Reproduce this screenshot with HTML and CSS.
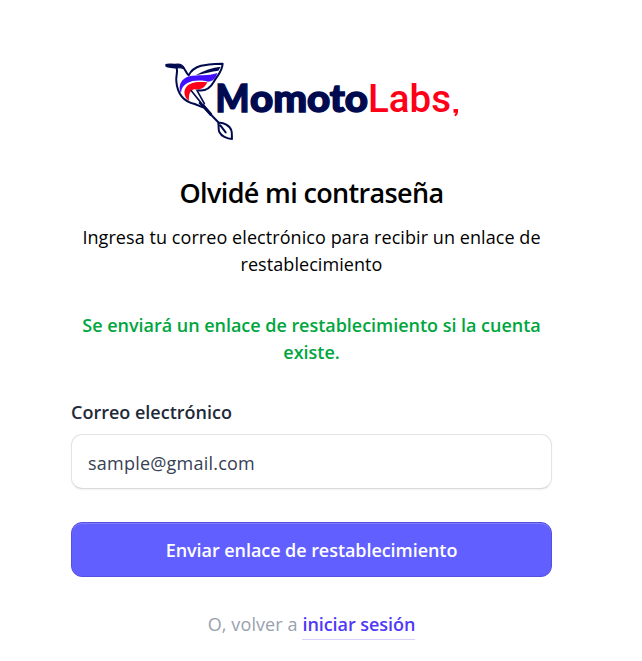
FILE: index.html
```html
<!DOCTYPE html>
<html lang="es">
<head>
<meta charset="utf-8">
<title>Olvidé mi contraseña</title>
<link rel="stylesheet" href="styles.css">
</head>
<body>
<main class="card">
  <svg class="logo" viewBox="163 60 300 82" role="img" aria-label="MomotoLabs">
    <g transform="translate(155 50) scale(.33333)" fill="none" stroke="#000b4f" stroke-width="6" stroke-linecap="round" stroke-linejoin="round">
      <path fill="#000b4f" stroke-width="4" d="M33 44C36 42 43 43 60 43C75 41 85 47 87 56C81 54 72 51 66 54C54 53 36 51 33 48Z"/>
      <path d="M65 53C69 68 62 77 64 94C67 130 84 154 119 162L144 172"/>
      <path d="M85 52C91 59 92 67 101 76C117 44 151 43 203 41C201 68 184 80 176 96C166 114 150 124 130 121"/>
      <path fill="#000b4f" stroke="none" d="M122 76C147 61 172 53 197 50L190 62C170 65 148 70 122 76Z"/>
      <path fill="#4310ff" stroke="none" d="M78 130C67 108 79 85 103 79C130 73 158 79 187 69C183 84 174 95 158 95C131 88 80 90 78 130Z"/>
      <path fill="#ff0018" stroke="none" d="M102 152C82 139 84 109 107 101C125 94 142 96 157 97C149 114 136 121 118 118C105 121 101 133 102 152Z"/>
      <path d="M109 122L150 173M126 121L148 161" stroke-width="5"/>
      <path d="M134 159L192 219" stroke-width="6"/>
      <path d="M145 167L167 193" stroke-width="9"/>
      <path d="M190 219C205 216 225 228 229 241C232 248 230 261 231 267C215 267 199 258 193 246C189 237 192 230 190 219ZM196 226L212 247"/>
    </g>
    <text class="logo-bold" x="215.5" y="112" textLength="34" lengthAdjust="spacingAndGlyphs">M</text>
    <text class="logo-bold" x="250" y="112" textLength="118" lengthAdjust="spacingAndGlyphs">omoto</text>
    <text class="logo-light" x="368" y="112" textLength="83" lengthAdjust="spacingAndGlyphs">Labs</text>
    <path class="logo-comma" d="M453.5 109h4.5v3q0 3-2.8 4.2l-1-1.3q1.3-.8 1.4-2.2h-2.1z"/>
  </svg>
  <h1 class="title">Olvidé mi contraseña</h1>
  <p class="lead">Ingresa tu correo electrónico para recibir un enlace de<br>restablecimiento</p>
  <p class="status">Se enviará un enlace de restablecimiento si la cuenta<br>existe.</p>
  <form class="form">
    <label class="label" for="email">Correo electrónico</label>
    <input class="input" id="email" type="text" value="sample@gmail.com">
    <button class="button" type="button">Enviar enlace de restablecimiento</button>
  </form>
  <p class="back">O, volver a <a class="link" href="#">iniciar sesión</a></p>
</main>
</body>
</html>
```
FILE: styles.css
```css
* { box-sizing: border-box; }
body {
  margin: 0;
  background: #fff;
  color: #000;
  font: 18px/27px "Open Sans", "Noto Sans", sans-serif;
}
.card {
  width: 481px;
  margin-left: 71px;
  padding-top: 60px;
  text-align: center;
  white-space: nowrap;
}
.logo { display: block; width: 300px; height: 82px; margin-left: 92px; }
.logo-bold {
  font: 900 38px Lato, sans-serif;
  fill: #000b4f;
  stroke: #000b4f;
  stroke-width: 1.5px;
}
.logo-light { font: 500 38px Roboto, sans-serif; fill: #ff0018; }
.logo-comma { fill: #ff0018; }
.title {
  margin: 31px 0 0;
  font-size: 27px;
  line-height: 40px;
  font-weight: 600;
  letter-spacing: -.65px;
}
.lead { margin: 11px 0 0; letter-spacing: .07px; }
.status { margin: 34px 0 0; color: #00a63e; font-weight: 600; letter-spacing: -.03px; }
.form { display: flex; flex-direction: column; margin-top: 33px; }
.label { text-align: left; color: #1e2939; font-weight: 600; }
.input {
  height: 55px;
  margin-top: 8px;
  padding: 3px 16px 0;
  border: 1px solid #e2e4e8;
  border-bottom-color: #d8dade;
  border-radius: 11px;
  box-shadow: 0 1px 2px rgba(0, 0, 0, .06);
  background: #fff;
  color: #364153;
  font: inherit;
  letter-spacing: .22px;
}
.button {
  height: 55px;
  margin-top: 33px;
  padding: 1px 0 0;
  border: 1px solid #564fe0;
  border-radius: 11px;
  background: #615fff;
  box-shadow: inset 0 1px 0 #817fff;
  color: #fff;
  font: inherit;
  font-weight: 600;
  letter-spacing: -.06px;
}
.back { margin: 34px 0 0; color: #99a1af; letter-spacing: .1px; }
.link {
  display: inline-block;
  height: 29px;
  border-bottom: 1px solid #d5d2fb;
  color: #4f39f6;
  font-weight: 600;
  letter-spacing: -.06px;
  text-decoration: none;
}
```
